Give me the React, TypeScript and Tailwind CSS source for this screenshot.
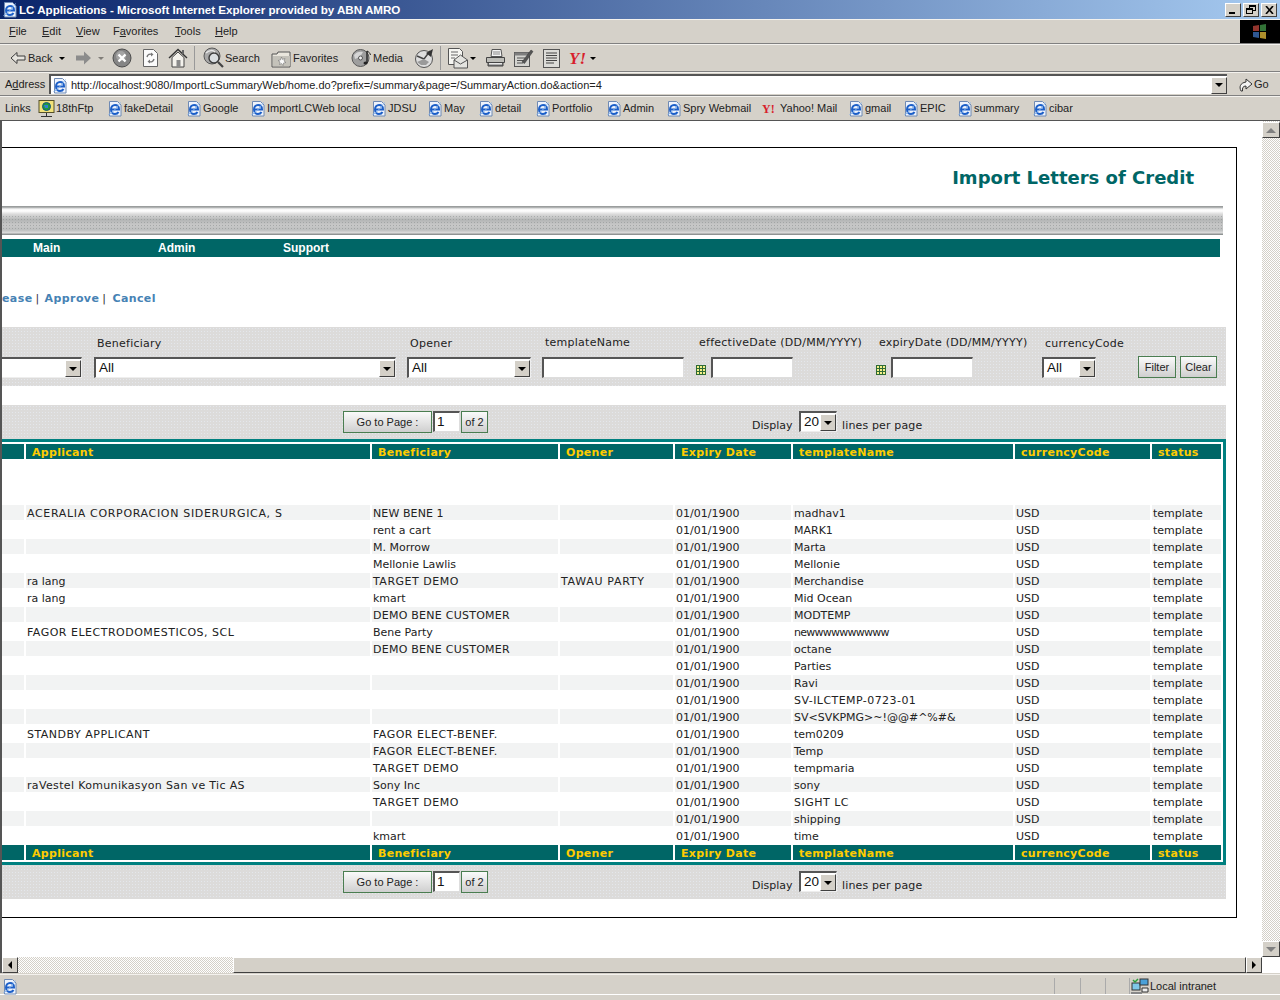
const UI_FONT = "font-['Liberation_Sans',sans-serif]";

function IeIcon() {
  return (
    <svg width="16" height="17" viewBox="0 0 16 17" className="shrink-0">
      <path d="M2.500 1.500h8l3.500 3.500v11h-11.500z" fill="#eef3fc" stroke="#6f8ab4" />
      <path d="M4.500 9.500h7.500c0-2.800-1.800-4.500-4-4.500S4 6.900 4 9.500 5.800 14 8 14c1.500 0 2.800-.7 3.500-2" fill="none" stroke="#1c5fc8" strokeWidth="2" />
      <path d="M1.500 14.500c3-1 8-6 12-12" fill="none" stroke="#8db8ec" strokeWidth="1" />
    </svg>
  );
}

function FtpIcon() {
  return (
    <svg width="17" height="19" viewBox="0 0 17 19" className="shrink-0">
      <rect x="1" y="1.500" width="15" height="12" fill="#f2e27a" stroke="#55502a" />
      <circle cx="8.500" cy="7.500" r="4" fill="#1f9b3c" stroke="#14507c" />
      <path d="M6 6h4v3H7z" fill="#2f7fd0" />
      <path d="M8.500 14v3M3 17.500h11" stroke="#333" />
    </svg>
  );
}

function ArrowDown() {
  return <span className="block w-0 h-0 border-x-[3px] border-x-transparent border-t-[3px] border-t-black" />;
}

function YahooMark({ big }: { big?: boolean }) {
  return (
    <span
      className={
        big
          ? "font-['Liberation_Serif',serif] font-bold italic text-[#d81e2c] text-[17px] leading-none w-[20px] shrink-0"
          : "font-['Liberation_Serif',serif] font-bold text-[#d81e2c] text-[12px] leading-none w-[17px] shrink-0"
      }
    >
      Y!
    </span>
  );
}

function ToolbarIcons({ name }: { name: string }) {
  if (name === 'back')
    return (
      <svg width="16" height="14" viewBox="0 0 16 14">
        <path d="M1 7l6-5.500V5h8v4H7v3.500z" fill="#e6e4de" stroke="#3c3c3c" />
      </svg>
    );
  if (name === 'forward')
    return (
      <svg width="17" height="14" viewBox="0 0 17 14">
        <path d="M16 7L9 .5V4.500H1v5h8v4z" fill="#8c8c8c" />
      </svg>
    );
  if (name === 'stop')
    return (
      <svg width="20" height="20" viewBox="0 0 20 20">
        <circle cx="10" cy="10" r="9" fill="#858585" stroke="#4c4c4c" />
        <circle cx="9" cy="8" r="5" fill="#a4a4a4" />
        <path d="M6.500 6.500l7 7M13.500 6.500l-7 7" stroke="#fff" strokeWidth="2.400" />
      </svg>
    );
  if (name === 'refresh')
    return (
      <svg width="17" height="20" viewBox="0 0 17 20">
        <path d="M1.500 1.500h10l4 4v13h-14z" fill="#fbfbfb" stroke="#666" />
        <path d="M5 9c.5-2.500 3-3.500 5-2.500M12 11c-.5 2.500-3 3.500-5 2.500" fill="none" stroke="#777" strokeWidth="1.400" />
        <path d="M9 4.500l2.500 2L9 8.500zM8 11.500l-2.500 2L8 15.500z" fill="#777" />
      </svg>
    );
  if (name === 'home')
    return (
      <svg width="20" height="20" viewBox="0 0 20 20">
        <path d="M1 10L10 1.500 19 10" fill="none" stroke="#333" strokeWidth="1.400" />
        <path d="M4 9.500L10 4l6 5.500V19H4z" fill="#f4f2ec" stroke="#444" />
        <rect x="8.500" y="12" width="4" height="7" fill="#8a8a8a" />
        <rect x="14" y="2" width="2" height="4" fill="#666" />
      </svg>
    );
  if (name === 'search')
    return (
      <svg width="21" height="22" viewBox="0 0 21 22">
        <circle cx="9" cy="9" r="8" fill="#a8a8a8" stroke="#585858" />
        <circle cx="11" cy="11" r="5" fill="#d9dde0" stroke="#3c3c3c" strokeWidth="1.400" />
        <path d="M3 6c3-3 7-3 9-1" stroke="#e6e6e6" fill="none" strokeWidth="1.500" />
        <path d="M15 15l5 5" stroke="#444" strokeWidth="2.200" />
      </svg>
    );
  if (name === 'favorites')
    return (
      <svg width="21" height="19" viewBox="0 0 21 19">
        <path d="M1 5h5l1-2h12v15H1z" fill="#e9e6dd" stroke="#555" />
        <path d="M2 7h17v10H2z" fill="#c4c2ba" />
        <path d="M10.500 8l1 2.500 2.500-1-1 2.500 2 1.500-2.500.5-.500 2.500-1.500-2-2 1 .500-2.500-2-1.500 2.500-.500z" fill="#fafafa" stroke="#666" strokeWidth=".5" />
      </svg>
    );
  if (name === 'media')
    return (
      <svg width="21" height="20" viewBox="0 0 21 20">
        <circle cx="9.500" cy="10" r="8.500" fill="#9e9e9e" stroke="#585858" />
        <path d="M3 7c2-3 6-4 9-3l-3 5-5 2z" fill="#d6d6d6" />
        <circle cx="9.500" cy="10" r="2" fill="#efefef" stroke="#555" />
        <path d="M16 3v12" stroke="#222" strokeWidth="1.400" />
        <path d="M16 3c2 1 3 2 3.500 4" fill="none" stroke="#222" />
        <ellipse cx="14.500" cy="15" rx="2" ry="1.500" fill="#222" />
      </svg>
    );
  if (name === 'history')
    return (
      <svg width="21" height="20" viewBox="0 0 21 20">
        <circle cx="10" cy="11" r="8.500" fill="#dedede" stroke="#555" />
        <path d="M10 11L3 8M10 11l6-8" stroke="#444" strokeWidth="1.400" />
        <path d="M12 5l7-4-2 8z" fill="#333" />
        <path d="M3 14l4 3 5 0 3-3-5-3z" fill="#9a9a9a" />
      </svg>
    );
  if (name === 'mail')
    return (
      <svg width="21" height="22" viewBox="0 0 21 22">
        <path d="M1.500 1.500h11l3 3v13h-14z" fill="#f6f6f2" stroke="#555" />
        <path d="M4 5h7M4 8h7M4 11h4" stroke="#666" />
        <path d="M7 13l6.500-5 7 5v8H7z" fill="#e4e4e0" stroke="#555" />
        <path d="M7 13l6.500 4 7-4" fill="none" stroke="#555" />
      </svg>
    );
  if (name === 'print')
    return (
      <svg width="21" height="20" viewBox="0 0 21 20">
        <path d="M7 1.500h9l1 7H6z" fill="#f4f4f4" stroke="#555" />
        <path d="M8 4h7M8 6h7" stroke="#888" />
        <path d="M1.500 9.500h18v5h-18z" fill="#bdbdb8" stroke="#444" />
        <path d="M3 14.500h15v3.500H3z" fill="#777" stroke="#444" />
        <rect x="4" y="15" width="13" height="1.500" fill="#e8e8e8" />
      </svg>
    );
  if (name === 'edit')
    return (
      <svg width="21" height="20" viewBox="0 0 21 20">
        <rect x="1.500" y="4.500" width="15" height="14" fill="#d4d4d0" stroke="#555" />
        <rect x="1.500" y="4.500" width="15" height="3" fill="#7e7e7e" />
        <path d="M4 10h8M4 12.500h8M4 15h6" stroke="#555" />
        <path d="M9 14L18 2l2 1.500-8.500 12z" fill="#555" stroke="#333" strokeWidth=".5" />
      </svg>
    );
  if (name === 'discuss')
    return (
      <svg width="19" height="21" viewBox="0 0 19 21">
        <rect x="1.500" y="1.500" width="16" height="18" fill="#dcdcd8" stroke="#555" />
        <path d="M4 5h11M4 7.500h11M4 10h11M4 12.500h11M4 15h8" stroke="#444" />
      </svg>
    );
  return null;
}

function ToolItem({ icon, label, cls }: { icon: string; label?: string; cls: string }) {
  return (
    <div className={`flex items-center shrink-0 ${cls}`}>
      <ToolbarIcons name={icon} />
      {label && <span className="ml-[1px] text-[#222]">{label}</span>}
    </div>
  );
}

const LINKS = [
  { label: '18thFtp', cls: 'w-[69px]', icon: 'ftp' },
  { label: 'fakeDetail', cls: 'w-[79px]', icon: 'ie' },
  { label: 'Google', cls: 'w-[64px]', icon: 'ie' },
  { label: 'ImportLCWeb local', cls: 'w-[121px]', icon: 'ie' },
  { label: 'JDSU', cls: 'w-[56px]', icon: 'ie' },
  { label: 'May', cls: 'w-[51px]', icon: 'ie' },
  { label: 'detail', cls: 'w-[57px]', icon: 'ie' },
  { label: 'Portfolio', cls: 'w-[71px]', icon: 'ie' },
  { label: 'Admin', cls: 'w-[60px]', icon: 'ie' },
  { label: 'Spry Webmail', cls: 'w-[96px]', icon: 'ie' },
  { label: 'Yahoo! Mail', cls: 'w-[86px]', icon: 'yahoo' },
  { label: 'gmail', cls: 'w-[55px]', icon: 'ie' },
  { label: 'EPIC', cls: 'w-[54px]', icon: 'ie' },
  { label: 'summary', cls: 'w-[75px]', icon: 'ie' },
  { label: 'cibar', cls: 'w-[50px]', icon: 'ie' },
];

const ROWS = [
  ['ACERALIA CORPORACION SIDERURGICA, S', 'NEW BENE 1', '', 'madhav1'],
  ['', 'rent a cart', '', 'MARK1'],
  ['', 'M. Morrow', '', 'Marta'],
  ['', 'Mellonie Lawlis', '', 'Mellonie'],
  ['ra lang', 'TARGET DEMO', 'TAWAU PARTY', 'Merchandise'],
  ['ra lang', 'kmart', '', 'Mid Ocean'],
  ['', 'DEMO BENE CUSTOMER', '', 'MODTEMP'],
  ['FAGOR ELECTRODOMESTICOS, SCL', 'Bene Party', '', 'newwwwwwwwww'],
  ['', 'DEMO BENE CUSTOMER', '', 'octane'],
  ['', '', '', 'Parties'],
  ['', '', '', 'Ravi'],
  ['', '', '', 'SV-ILCTEMP-0723-01'],
  ['', '', '', 'SV<SVKPMG>~!@@#^%#&'],
  ['STANDBY APPLICANT', 'FAGOR ELECT-BENEF.', '', 'tem0209'],
  ['', 'FAGOR ELECT-BENEF.', '', 'Temp'],
  ['', 'TARGET DEMO', '', 'tempmaria'],
  ['raVestel Komunikasyon San ve Tic AS', 'Sony Inc', '', 'sony'],
  ['', 'TARGET DEMO', '', 'SIGHT LC'],
  ['', '', '', 'shipping'],
  ['', 'kmart', '', 'time'],
];

const HEADERS = ['', 'Applicant', 'Beneficiary', 'Opener', 'Expiry Date', 'templateName', 'currencyCode', 'status'];

const PANEL_BG =
  'bg-[#dcdbda] bg-[radial-gradient(#e4e7ec_0.6px,transparent_0.7px)] bg-[length:3px_3px]';

// the bitmap font of the original runs wider on capitals and narrower on w
const CELL_TRACKING: Record<string, string> = {
  'ACERALIA CORPORACION SIDERURGICA, S': 'tracking-[0.67px]',
  'FAGOR ELECTRODOMESTICOS, SCL': 'tracking-[0.5px]',
  'STANDBY APPLICANT': 'tracking-[0.5px]',
  'FAGOR ELECT-BENEF.': 'tracking-[0.5px]',
  'TARGET DEMO': 'tracking-[0.5px]',
  'TAWAU PARTY': 'tracking-[0.7px]',
  'DEMO BENE CUSTOMER': 'tracking-[0.25px]',
  'NEW BENE 1': 'tracking-[0.1px]',
  'SIGHT LC': 'tracking-[0.5px]',
  'SV-ILCTEMP-0723-01': 'tracking-[0.44px]',
  'raVestel Komunikasyon San ve Tic AS': 'tracking-[0.34px]',
  newwwwwwwwww: 'tracking-[-0.75px]',
};

function HeaderRow() {
  return (
    <tr>
      {HEADERS.map((h, i) => (
        <th
          key={i}
          className="h-[15px] p-0 pl-[6px] pt-[2px] bg-[#006666] text-left text-[#ffcc00] text-[11px] leading-[13px] font-bold tracking-[0.3px] whitespace-nowrap overflow-hidden"
        >
          {h}
        </th>
      ))}
    </tr>
  );
}

function SelectBox({ value, cls }: { value: string; cls: string }) {
  return (
    <div className={`h-[21px] flex bg-white border-t-2 border-l-2 border-t-[#555] border-l-[#555] border-b border-r border-b-[#eee] border-r-[#eee] ${cls}`}>
      <span className="flex-1 pl-[3px] text-[13.5px] leading-[18px] text-[#111] font-['Liberation_Sans',sans-serif]">{value}</span>
      <span className="w-[16px] h-[17px] my-[1px] bg-[#d4d0c8] flex items-center justify-center border-r border-b border-r-[#404040] border-b-[#404040] border-t border-l border-t-white border-l-white">
        <span className="w-0 h-0 border-x-[4px] border-x-transparent border-t-[4px] border-t-black" />
      </span>
    </div>
  );
}

function TextBox({ value, cls }: { value?: string; cls: string }) {
  return (
    <div className={`h-[21px] bg-white border-t-2 border-l-2 border-t-[#555] border-l-[#555] border-b border-r border-b-[#ddd] border-r-[#ddd] pl-[2px] text-[13.5px] leading-[18px] text-[#111] font-['Liberation_Sans',sans-serif] ${cls}`}>
      {value}
    </div>
  );
}

function CalendarIcon() {
  return (
    <svg width="10" height="10" viewBox="0 0 10 10" className="shrink-0 mb-[3px]">
      <rect x=".5" y=".5" width="9" height="9" fill="#f4f08a" stroke="#2f6b35" />
      <path d="M.5 3.500h9M.5 6.500h9M3.500.5v9M6.500.5v9" stroke="#2f6b35" />
    </svg>
  );
}

function GreenButton({ label, cls }: { label: string; cls: string }) {
  return (
    <div className={`flex items-center justify-center border border-[#4a7d50] bg-[linear-gradient(180deg,#fafafa,#cfcfcf)] font-['Liberation_Sans',sans-serif] text-[11px] text-[#222] shrink-0 ${cls}`}>
      {label}
    </div>
  );
}

function PagerBar() {
  return (
    <div className={`h-[34px] w-[1224px] flex items-start pt-[6px] pl-[341px] ${PANEL_BG}`}>
      <GreenButton label="Go to Page :" cls="w-[89px] h-[22px]" />
      <TextBox value="1" cls="w-[27px] ml-[1px]" />
      <GreenButton label="of 2" cls="w-[27px] h-[22px] ml-[1px]" />
      <span className="ml-[264px] mt-[8px] text-[11px] leading-[14px] text-[#222] w-[47px]">Display</span>
      <SelectBox value="20" cls="w-[38px]" />
      <span className="ml-[5px] mt-[8px] text-[11px] leading-[14px] tracking-[0.15px] text-[#222]">lines per page</span>
    </div>
  );
}

function FilterColumn({ label, cls, children, raised }: { label: string; cls: string; children: React.ReactNode; raised?: boolean }) {
  return (
    <div className={`shrink-0 flex flex-col ${cls}`}>
      <span className={raised ? 'h-[30px] pt-[9px] pl-[3px] text-[11px] leading-[14px] tracking-[0.25px] text-[#222] whitespace-nowrap' : 'h-[30px] pt-[10px] pl-[3px] text-[11px] leading-[14px] tracking-[0.25px] text-[#222] whitespace-nowrap'}>
        {label}
      </span>
      {children}
    </div>
  );
}

export default function App() {
  return (
    <div className={`w-[1280px] h-[1000px] overflow-hidden flex flex-col bg-[#d5d1c9] ${UI_FONT} text-[11px] text-black`}>
      {/* Title bar */}
      <div className="h-[19px] shrink-0 flex items-center bg-[linear-gradient(90deg,#0a246a,#a6caf0)] pl-[2px] pr-[2px]">
        <IeIcon />
        <span className="ml-[1px] text-white font-bold text-[11.6px]">LC Applications - Microsoft Internet Explorer provided by ABN AMRO</span>
        <div className="ml-auto flex gap-[2px] mr-[1px]">
          <span className="relative w-[16px] h-[14px] bg-[#d4d0c8] border border-t-white border-l-white border-b-[#404040] border-r-[#404040]">
            <span className="absolute left-[3px] bottom-[2px] w-[6px] h-[2px] bg-black" />
          </span>
          <span className="relative w-[16px] h-[14px] bg-[#d4d0c8] border border-t-white border-l-white border-b-[#404040] border-r-[#404040]">
            <span className="absolute left-[5px] top-[1px] w-[7px] h-[6px] border border-t-2 border-black" />
            <span className="absolute left-[2px] top-[4px] w-[7px] h-[6px] bg-[#d4d0c8] border border-t-2 border-black" />
          </span>
          <span className="w-[16px] h-[14px] bg-[#d4d0c8] border border-t-white border-l-white border-b-[#404040] border-r-[#404040] flex items-center justify-center">
            <svg width="9" height="8" viewBox="0 0 9 8">
              <path d="M1 0l7 8M8 0L1 8" stroke="#000" strokeWidth="1.600" />
            </svg>
          </span>
        </div>
      </div>

      {/* Menu bar */}
      <div className="h-[25px] shrink-0 flex border-t border-t-[#f4f2ee] border-b border-b-[#808080]">
        <div className="flex items-center text-[#222] pl-[9px]">
          <span className="w-[33px]"><u>F</u>ile</span>
          <span className="w-[34px]"><u>E</u>dit</span>
          <span className="w-[37px]"><u>V</u>iew</span>
          <span className="w-[62px]">F<u>a</u>vorites</span>
          <span className="w-[40px]"><u>T</u>ools</span>
          <span><u>H</u>elp</span>
        </div>
        <div className="ml-auto w-[40px] bg-black flex items-center justify-center">
          <svg width="16" height="16" viewBox="0 0 16 16" className="opacity-80">
            <path d="M1 2l6-1v6H1z" fill="#b8433a" />
            <path d="M8 1l6-1v7H8z" fill="#3f8f45" />
            <path d="M1 8h6v6l-6-1z" fill="#3d6fb8" />
            <path d="M8 8h6v7l-6-1z" fill="#d9b338" />
          </svg>
        </div>
      </div>

      {/* Toolbar */}
      <div className="h-[28px] shrink-0 flex items-center border-t border-t-[#f4f2ee] border-b border-b-[#808080] pl-[10px]">
        <ToolItem icon="back" label="Back" cls="w-[49px] [&>span]:ml-[2px]" />
        <ArrowDown />
        <div className="ml-[10px]"><ToolItem icon="forward" cls="w-[23px]" /></div>
        <span className="opacity-40 mr-[8px]"><ArrowDown /></span>
        <ToolItem icon="stop" cls="w-[30px]" />
        <ToolItem icon="refresh" cls="w-[26px]" />
        <ToolItem icon="home" cls="w-[26px]" />
        <span className="w-[1px] h-[24px] bg-[#999] mr-[8px]" />
        <ToolItem icon="search" label="Search" cls="w-[68px]" />
        <ToolItem icon="favorites" label="Favorites" cls="w-[80px]" />
        <ToolItem icon="media" label="Media" cls="w-[63px]" />
        <ToolItem icon="history" cls="w-[26px]" />
        <span className="w-[1px] h-[24px] bg-[#999] mr-[6px]" />
        <ToolItem icon="mail" cls="w-[23px]" />
        <span className="mr-[9px]"><ArrowDown /></span>
        <ToolItem icon="print" cls="w-[28px]" />
        <ToolItem icon="edit" cls="w-[29px]" />
        <ToolItem icon="discuss" cls="w-[27px]" />
        <YahooMark big />
        <span className="ml-[1px]"><ArrowDown /></span>
      </div>

      {/* Address bar */}
      <div className="h-[24px] shrink-0 flex items-center border-t border-t-[#f4f2ee] border-b border-b-[#808080] pl-[5px]">
        <span className="w-[44px] text-[#222]">A<u>d</u>dress</span>
        <div className="w-[1178px] h-[20px] bg-white flex items-center border-t-2 border-l-2 border-t-[#555] border-l-[#555] pl-[1px]">
          <IeIcon />
          <span className="ml-[3px] text-[#222]">http://localhost:9080/ImportLcSummaryWeb/home.do?prefix=/summary&amp;page=/SummaryAction.do&amp;action=4</span>
          <span className="ml-auto w-[16px] h-[17px] bg-[#d4d0c8] flex items-center justify-center border border-t-white border-l-white border-r-[#404040] border-b-[#404040]">
            <span className="w-0 h-0 border-x-[4px] border-x-transparent border-t-[4px] border-t-black" />
          </span>
        </div>
        <div className="ml-[11px] flex items-center">
          <svg width="15" height="15" viewBox="0 0 15 15">
            <path d="M3 14C1 10 2 6 8 5V2l6 5-6 5V9C5 9 4 11 4.500 14z" fill="#f4f4f4" stroke="#333" />
          </svg>
          <span className="ml-[1px] text-[#222]">Go</span>
        </div>
      </div>

      {/* Links bar */}
      <div className="h-[25px] shrink-0 flex items-center border-t border-t-[#f4f2ee] border-b border-b-[#555] pl-[5px]">
        <span className="w-[33px] text-[#222]">Links</span>
        {LINKS.map((link) => (
          <div key={link.label} className={`flex items-center shrink-0 ${link.cls}`}>
            {link.icon === 'ftp' && <FtpIcon />}
            {link.icon === 'ie' && <IeIcon />}
            {link.icon === 'yahoo' && <YahooMark />}
            <span className="ml-[1px] text-[#222] whitespace-nowrap">{link.label}</span>
          </div>
        ))}
      </div>

      {/* Page and vertical scrollbar */}
      <div className="h-[836px] shrink-0 flex bg-white border-l-2 border-l-[#555]">
        <div className="w-[1260px] overflow-hidden font-['DejaVu_Sans','Liberation_Sans',sans-serif]">
          <div className="mt-[26px] w-[1235px] h-[771px] border-t border-b border-r border-black">
            <div className="h-[58px] flex justify-end items-start pt-[17px] pr-[42px]">
              <h1 className="text-[18px] leading-[26px] font-bold text-[#006666]">Import Letters of Credit</h1>
            </div>

            <div className="h-[29px] w-[1221px] pt-[9px] bg-[linear-gradient(180deg,#9a9d9d_0,#9a9d9d_1px,#f4f4f4_3px,#ffffff_5px,#dcdcdc_8px,#b4b6b6_14px,#c8c8c8_19px,#bdbfbf_24px,#dedede_27px,#8f9393_28px)]">
              <div className="h-[15px] bg-[radial-gradient(#8f9393_0.6px,transparent_0.8px)] bg-[length:3px_3px] opacity-60" />
            </div>

            <div className="mt-[4px] h-[18px] w-[1218px] bg-[#006666] flex items-center font-['Liberation_Sans',sans-serif] font-bold text-white text-[12px]">
              <span className="ml-[31px] w-[125px]">Main</span>
              <span className="w-[125px]">Admin</span>
              <span>Support</span>
            </div>

            <div className="h-[70px] flex items-center pt-[15px] text-[11px] font-bold text-[#4682b4] tracking-[0.4px] whitespace-nowrap">
              <span>ease</span>
              <span className="ml-[3px] font-normal text-[#333]">|</span>
              <span className="ml-[5px]">Approve</span>
              <span className="ml-[3px] font-normal text-[#333]">|</span>
              <span className="ml-[6px]">Cancel</span>
            </div>

            {/* Filter */}
            <div className={`h-[59px] w-[1224px] flex ${PANEL_BG}`}>
              <FilterColumn label="" cls="w-[92px]"><SelectBox value="" cls="w-[82px] -ml-[2px]" /></FilterColumn>
              <FilterColumn label="Beneficiary" cls="w-[313px]"><SelectBox value="All" cls="w-[302px]" /></FilterColumn>
              <FilterColumn label="Opener" cls="w-[135px]"><SelectBox value="All" cls="w-[124px]" /></FilterColumn>
              <FilterColumn label="templateName" cls="w-[154px]" raised><TextBox cls="w-[142px]" /></FilterColumn>
              <FilterColumn label="effectiveDate (DD/MM/YYYY)" cls="w-[180px]" raised>
                <div className="flex items-end gap-[5px]"><CalendarIcon /><TextBox cls="w-[82px]" /></div>
              </FilterColumn>
              <FilterColumn label="expiryDate (DD/MM/YYYY)" cls="w-[166px]" raised>
                <div className="flex items-end gap-[5px]"><CalendarIcon /><TextBox cls="w-[82px]" /></div>
              </FilterColumn>
              <FilterColumn label="currencyCode" cls="w-[96px]"><SelectBox value="All" cls="w-[54px]" /></FilterColumn>
              <GreenButton label="Filter" cls="w-[38px] h-[22px] mt-[29px]" />
              <GreenButton label="Clear" cls="w-[37px] h-[22px] mt-[29px] ml-[4px]" />
            </div>

            <div className="h-[19px]" />
            <PagerBar />

            {/* Table */}
            <div className="w-[1224px] border-t-[3px] border-b-[3px] border-r-[3px] border-[#008080]">
              <table className="table-fixed border-separate border-spacing-[2px] w-[1223px] -ml-[2px] text-[11px] text-[#222]">
                <colgroup>
                  <col className="w-[22px]" />
                  <col className="w-[344px]" />
                  <col className="w-[186px]" />
                  <col className="w-[113px]" />
                  <col className="w-[116px]" />
                  <col className="w-[220px]" />
                  <col className="w-[135px]" />
                  <col className="w-[69px]" />
                </colgroup>
                <thead>
                  <HeaderRow />
                  <tr>
                    <td colSpan={8} className="h-[42px] p-0" />
                  </tr>
                </thead>
                <tbody>
                  {ROWS.map((row, i) => {
                    const cells = ['', row[0], row[1], row[2], '01/01/1900', row[3], 'USD', 'template'];
                    return (
                      <tr key={i}>
                        {cells.map((cell, j) => (
                          <td
                            key={j}
                            className={`h-[15px] p-0 pl-[1px] pt-[2px] leading-[13px] whitespace-nowrap overflow-hidden ${i % 2 === 0 ? 'bg-[#f2f3f3]' : ''} ${CELL_TRACKING[cell] ?? ''}`}
                          >
                            {cell}
                          </td>
                        ))}
                      </tr>
                    );
                  })}
                </tbody>
                <tfoot>
                  <HeaderRow />
                </tfoot>
              </table>
            </div>

            <PagerBar />
          </div>
        </div>

        {/* Vertical scrollbar */}
        <div className="w-[18px] flex flex-col bg-[repeating-conic-gradient(#d4d0c8_0_25%,#ffffff_0_50%)] bg-[length:2px_2px]">
          <span className="h-[16px] mt-[1px] bg-[#d4d0c8] flex items-center justify-center border border-t-white border-l-white border-r-[#404040] border-b-[#404040]">
            <span className="w-0 h-0 border-x-[5px] border-x-transparent border-b-[5px] border-b-[#808080]" />
          </span>
          <span className="h-[16px] mt-auto bg-[#d4d0c8] flex items-center justify-center border border-t-white border-l-white border-r-[#404040] border-b-[#404040]">
            <span className="w-0 h-0 border-x-[5px] border-x-transparent border-t-[5px] border-t-[#808080]" />
          </span>
        </div>
      </div>

      {/* Horizontal scrollbar */}
      <div className="h-[16px] shrink-0 flex bg-white border-l-2 border-l-[#555]">
        <div className="w-[1260px] flex bg-[repeating-conic-gradient(#d4d0c8_0_25%,#ffffff_0_50%)] bg-[length:2px_2px]">
          <span className="w-[16px] bg-[#d4d0c8] flex items-center justify-center border border-t-white border-l-white border-r-[#404040] border-b-[#404040]">
            <span className="w-0 h-0 border-y-[4px] border-y-transparent border-r-[4px] border-r-black" />
          </span>
          <span className="ml-[215px] flex-1 bg-[#d4d0c8] border border-t-white border-l-white border-r-[#404040] border-b-[#404040]" />
          <span className="w-[16px] bg-[#d4d0c8] flex items-center justify-center border border-t-white border-l-white border-r-[#404040] border-b-[#404040]">
            <span className="w-0 h-0 border-y-[4px] border-y-transparent border-l-[4px] border-l-black" />
          </span>
        </div>
      </div>

      {/* Status bar */}
      <div className="mt-[1px] h-[21px] shrink-0 flex items-center pt-[3px] border-t border-t-[#f4f2ee] border-b border-b-white pl-[2px] text-[#222]">
        <IeIcon />
        <span className="ml-[1036px] w-[26px] h-full border-l border-l-[#aaa]" />
        <span className="w-[25px] h-full border-l border-l-[#aaa]" />
        <span className="w-[24px] h-full border-l border-l-[#aaa]" />
        <div className="h-full flex items-center border-l border-l-[#aaa] pl-[1px]">
          <svg width="18" height="17" viewBox="0 0 18 17">
            <rect x="1" y="5" width="8" height="7" fill="#7fc7e8" stroke="#333" />
            <rect x="9" y="1" width="8" height="6" fill="#4aa0d8" stroke="#333" />
            <path d="M2 2l2 2 3-3" stroke="#2a9d3a" strokeWidth="1.500" fill="none" />
            <path d="M0 14h11v2H0z" fill="#888" />
            <path d="M11 10h6v4h-6z" fill="#eee" stroke="#333" />
          </svg>
          <span className="ml-[1px]">Local intranet</span>
        </div>
      </div>
    </div>
  );
}
